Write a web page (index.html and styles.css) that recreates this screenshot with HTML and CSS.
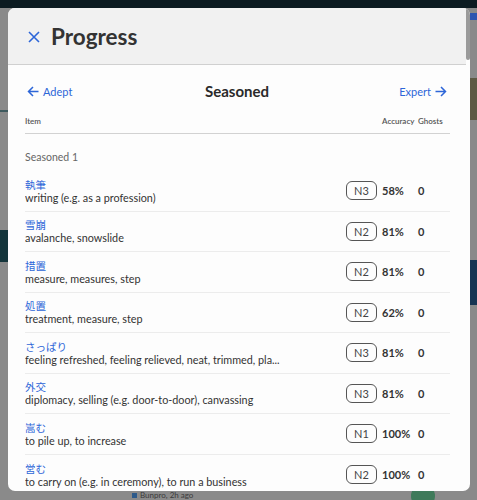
FILE: index.html
```html
<!DOCTYPE html>
<html>
<head>
<meta charset="utf-8">
<link rel="stylesheet" href="styles.css">
</head>
<body>
<div class="backdrop">
  <div class="topbar"></div>
  <div class="bg-block bg-left1"></div>
  <div class="bg-block bg-left2"></div>
  <div class="bg-block bg-right1"></div>
  <div class="bg-block bg-right2"></div>
  <div class="bg-block bg-right3"></div>
  <div class="bg-block bg-meta"><span class="bg-sq"></span>Bunpro, 2h ago</div>
  <div class="bg-block bg-circle"></div>
</div>
<div class="modal">
  <div class="modal-header">
    <svg class="close" width="12" height="12" viewBox="0 0 12 12"><path d="M1 1L11 11M11 1L1 11" stroke="#2d66d8" stroke-width="1.6" fill="none"/></svg>
    <h1>Progress</h1>
  </div>
  <div class="scroll-thumb"></div>
  <div class="modal-body">
    <div class="nav">
      <a class="nav-link"><svg width="12" height="11" viewBox="0 0 12 11"><path d="M11.5 5.5H1.5M6 1L1.5 5.5L6 10" stroke="#2d66d8" stroke-width="1.5" fill="none"/></svg>Adept</a>
      <div class="nav-title">Seasoned</div>
      <a class="nav-link right">Expert<svg width="12" height="11" viewBox="0 0 12 11"><path d="M0.5 5.5H10.5M6 1L10.5 5.5L6 10" stroke="#2d66d8" stroke-width="1.5" fill="none"/></svg></a>
    </div>
    <div class="thead">
      <span class="th-item">Item</span>
      <span class="th-acc">Accuracy</span>
      <span class="th-ghost">Ghosts</span>
    </div>
    <div class="group">Seasoned 1</div>
    <div class="row">
      <div class="item"><div class="jp">執筆</div><div class="en">writing (e.g. as a profession)</div></div>
      <span class="pill">N3</span><span class="acc">58%</span><span class="ghost">0</span>
    </div>
    <div class="row">
      <div class="item"><div class="jp">雪崩</div><div class="en">avalanche, snowslide</div></div>
      <span class="pill">N2</span><span class="acc">81%</span><span class="ghost">0</span>
    </div>
    <div class="row">
      <div class="item"><div class="jp">措置</div><div class="en">measure, measures, step</div></div>
      <span class="pill">N2</span><span class="acc">81%</span><span class="ghost">0</span>
    </div>
    <div class="row">
      <div class="item"><div class="jp">処置</div><div class="en">treatment, measure, step</div></div>
      <span class="pill">N2</span><span class="acc">62%</span><span class="ghost">0</span>
    </div>
    <div class="row">
      <div class="item"><div class="jp">さっぱり</div><div class="en">feeling refreshed, feeling relieved, neat, trimmed, pla...</div></div>
      <span class="pill">N3</span><span class="acc">81%</span><span class="ghost">0</span>
    </div>
    <div class="row">
      <div class="item"><div class="jp">外交</div><div class="en">diplomacy, selling (e.g. door-to-door), canvassing</div></div>
      <span class="pill">N3</span><span class="acc">81%</span><span class="ghost">0</span>
    </div>
    <div class="row">
      <div class="item"><div class="jp">嵩む</div><div class="en">to pile up, to increase</div></div>
      <span class="pill">N1</span><span class="acc">100%</span><span class="ghost">0</span>
    </div>
    <div class="row last">
      <div class="item"><div class="jp">営む</div><div class="en">to carry on (e.g. in ceremony), to run a business</div></div>
      <span class="pill">N2</span><span class="acc">100%</span><span class="ghost">0</span>
    </div>
  </div>
</div>
</body>
</html>
```
FILE: styles.css
```css
* { box-sizing: border-box; }
html, body { margin: 0; padding: 0; }
body {
  width: 477px;
  height: 500px;
  overflow: hidden;
  background: #8a8a8a;
  font-family: Lato, "Noto Sans CJK JP", sans-serif;
  color: #333;
  position: relative;
}
.backdrop { position: absolute; inset: 0; }
.topbar { position: absolute; left: 0; top: 0; width: 477px; height: 8px; background: #0c1b21; }
.bg-block { position: absolute; }
.bg-left1 { left: 0; top: 110px; width: 8px; height: 2px; background: #3e5a5e; }
.bg-left2 { left: 0; top: 230px; width: 8px; height: 32px; background: #14353b; }
.bg-right1 { right: 0; top: 13px; width: 7px; height: 7px; background: #2f55b0; }
.bg-right2 { right: 0; top: 78px; width: 7px; height: 42px; background: #5e5a44; }
.bg-right3 { right: 0; top: 260px; width: 7px; height: 45px; background: #173452; }
.bg-meta {
  left: 132px;
  top: 491px;
  font-size: 8px;
  line-height: 9px;
  color: #3a3a3a;
  display: flex;
  align-items: center;
  gap: 3px;
}
.bg-sq { width: 5px; height: 5px; background: #2d5a8a; display: inline-block; }
.bg-circle { left: 411px; top: 484px; width: 24px; height: 24px; border-radius: 50%; background: #3f7a5a; }
.modal {
  position: absolute;
  left: 8px;
  top: 8px;
  width: 462px;
  height: 483px;
  background: #fdfdfd;
  border-radius: 7px;
  overflow: hidden;
}
.modal-header {
  height: 57px;
  background: #f1f1f1;
  border-bottom: 1px solid #d0d0d0;
  display: flex;
  align-items: center;
  padding-left: 20px;
  margin-right: 4px;
}
.close { margin-right: 11px; margin-top: 1px; }
h1 {
  margin: 0;
  font-size: 22.5px;
  font-weight: 700;
  color: #333;
}
.scroll-thumb {
  position: absolute;
  right: 0;
  top: 0;
  width: 4px;
  height: 52px;
  background: #9a9a9a;
  border-radius: 2px;
}
.modal-body { padding: 0 20px 0 17px; }
.nav {
  display: flex;
  align-items: center;
  justify-content: space-between;
  height: 16px;
  margin-top: 18px;
  padding: 0 3px 0 2px;
}
.nav-link {
  display: flex;
  align-items: center;
  gap: 4px;
  color: #2d66d8;
  font-size: 11px;
  width: 70px;
}
.nav-link.right { justify-content: flex-end; }
.nav-title { font-size: 15px; font-weight: 700; color: #2a2a2a; }
.thead {
  display: flex;
  align-items: center;
  height: 10px;
  margin-top: 17px;
  padding-bottom: 7px;
  border-bottom: 1px solid #d2d2d2;
  box-sizing: content-box;
  font-size: 8px;
  color: #555;
  font-weight: 600;
}
.th-item { flex: 1; }
.th-acc { width: 36px; }
.th-ghost { width: 32px; }
.group {
  margin-top: 15px;
  font-size: 10.5px;
  line-height: 16px;
  color: #666;
  margin-bottom: 6px;
}
.row {
  display: flex;
  align-items: center;
  height: 40.5px;
  border-bottom: 1px solid #ececec;
}
.row.last { border-bottom: none; }
.item { flex: 1; min-width: 0; padding-top: 2px; }
.jp {
  font-size: 10.5px;
  line-height: 12px;
  color: #2d66d8;
}
.en {
  font-size: 10.8px;
  line-height: 14px;
  color: #333;
  white-space: nowrap;
  overflow: hidden;
}
.pill {
  width: 31px;
  height: 19px;
  border: 1px solid #555;
  border-radius: 6px;
  font-size: 11px;
  display: flex;
  align-items: center;
  justify-content: center;
  color: #444;
  margin-right: 5px;
  flex: none;
}
.acc { width: 36px; font-size: 11px; font-weight: 700; color: #333; }
.ghost { width: 32px; font-size: 11px; font-weight: 700; color: #333; }
```
